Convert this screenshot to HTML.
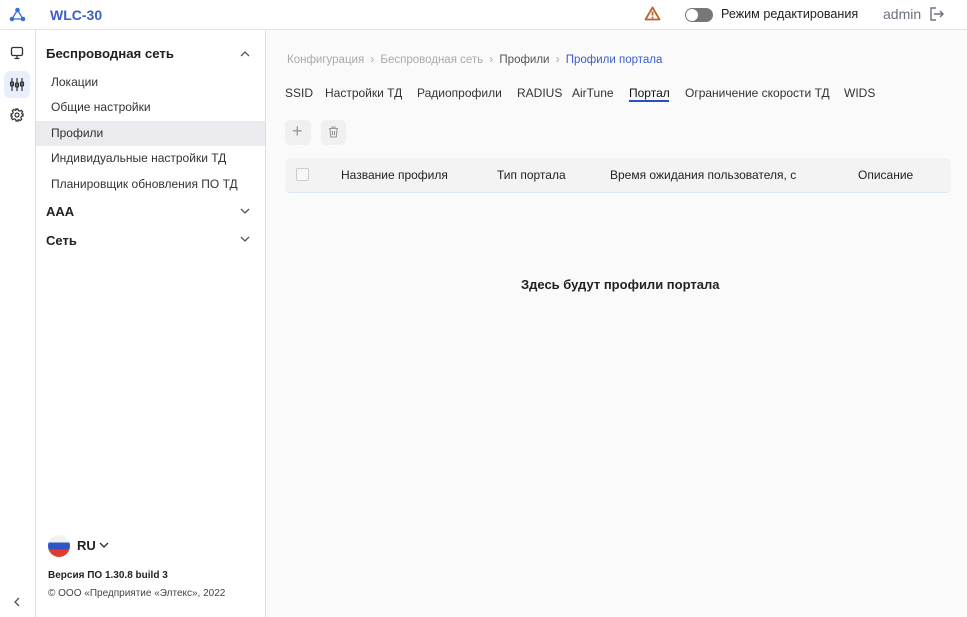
<!DOCTYPE html>
<html><head><meta charset="utf-8"><style>
*{box-sizing:border-box;margin:0;padding:0}
body{width:967px;height:617px;overflow:hidden;font-family:"Liberation Sans","Noto Sans CJK SC",sans-serif;background:#fafafa;color:#222;position:relative;font-size:12px}
.hdr{position:absolute;left:0;top:0;width:967px;height:30px;background:#fff;border-bottom:1px solid #e4e4ea}
.rail{position:absolute;left:0;top:30px;width:36px;height:587px;background:#fff;border-right:1px solid #dedee4}
.side{position:absolute;left:36px;top:30px;width:230px;height:587px;background:#fff;border-right:1px solid #dedee4}
.a{position:absolute;white-space:nowrap}
.item{position:absolute;left:0;width:229px;height:25px;padding-left:15px;line-height:25px;font-size:12px;color:#333}
.tab{position:absolute;top:86px;font-size:12px;color:#333}
</style></head><body>
<div class="hdr">
<svg class="a" style="left:9px;top:7px" width="17" height="15" viewBox="0 0 17 15"><g stroke="#3a6fd8" stroke-width="1.3" fill="none"><line x1="8.5" y1="3" x2="3" y2="12"/><line x1="8.5" y1="3" x2="14" y2="12"/><line x1="3" y1="12" x2="14" y2="12"/></g><circle cx="8.5" cy="3" r="2.3" fill="#3a6fd8"/><circle cx="3" cy="12" r="2.3" fill="#3a6fd8"/><circle cx="14" cy="12" r="2.3" fill="#3a6fd8"/></svg>
<div class="a" style="left:50px;top:7px;font-size:14px;font-weight:bold;color:#3a5fc8">WLC-30</div>
<svg class="a" style="left:644px;top:6px" width="17" height="15" viewBox="0 0 17 15"><path d="M8.5 1.5L15.5 13.5H1.5Z" fill="none" stroke="#c0622a" stroke-width="1.8" stroke-linejoin="round"/><line x1="8.5" y1="5.5" x2="8.5" y2="9.5" stroke="#c0622a" stroke-width="1.8"/><circle cx="8.5" cy="11.5" r="1" fill="#c0622a"/></svg>
<div class="a" style="left:685px;top:8px;width:28px;height:14px;border-radius:7px;background:#777"></div>
<div class="a" style="left:686px;top:9px;width:12px;height:12px;border-radius:6px;background:#fff"></div>
<div class="a" style="left:721px;top:7px;font-size:12.6px;color:#222">Режим редактирования</div>
<div class="a" style="left:883px;top:6px;font-size:14px;color:#6b7280">admin</div>
<svg class="a" style="left:928px;top:6px" width="16" height="16" viewBox="0 0 16 16" fill="none" stroke="#6b7280" stroke-width="1.4"><path d="M8 2H3v12h5"/><path d="M6 8h9M12 5l3 3-3 3"/></svg>
</div>
<div class="rail">
<svg class="a" style="left:10px;top:16px" width="14" height="14" viewBox="0 0 14 14" fill="none" stroke="#333" stroke-width="1.3"><rect x="1.5" y="1.5" width="11" height="8" rx="1.5"/><path d="M7 10v2.5M4.5 12.5h5"/></svg>
<div class="a" style="left:4px;top:41px;width:26px;height:27px;border-radius:6px;background:#e8eefb"></div>
<svg class="a" style="left:9px;top:47px" width="16" height="15" viewBox="0 0 16 15" fill="none" stroke="#333" stroke-width="1.2"><path d="M3 1v13M8 1v13M13 1v13"/><rect x="1.5" y="5" width="3" height="4" rx="1"/><rect x="6.5" y="6" width="3" height="4" rx="1"/><rect x="11.5" y="5" width="3" height="4" rx="1"/></svg>
<svg class="a" style="left:10px;top:78px" width="14" height="14" viewBox="0 0 14 14" fill="none" stroke="#333" stroke-width="1.2"><circle cx="7" cy="7" r="2"/><path d="M6 1h2l.4 1.6 1.4.6 1.4-.9 1.4 1.4-.9 1.4.6 1.4L13 6v2l-1.6.4-.6 1.4.9 1.4-1.4 1.4-1.4-.9-1.4.6L8 13H6l-.4-1.6-1.4-.6-1.4.9-1.4-1.4.9-1.4-.6-1.4L1 8V6l1.6-.4.6-1.4-.9-1.4 1.4-1.4 1.4.9 1.4-.6z"/></svg>
<svg class="a" style="left:12px;top:566px" width="10" height="12" viewBox="0 0 10 12" fill="none" stroke="#555" stroke-width="1.3"><path d="M7 2L3 6l4 4"/></svg>
</div>
<div class="side">
<div class="a" style="left:10px;top:16px;font-size:13.2px;font-weight:bold;color:#222">Беспроводная сеть</div>
<svg class="a" style="left:204px;top:20px" width="10" height="7" viewBox="0 0 10 7" fill="none" stroke="#555" stroke-width="1.3"><path d="M1 6l4-4 4 4"/></svg>
<div class="item" style="top:40px">Локации</div>
<div class="item" style="top:65px">Общие настройки</div>
<div class="item" style="top:91px;background:#ebebef">Профили</div>
<div class="item" style="top:116px">Индивидуальные настройки ТД</div>
<div class="item" style="top:142px">Планировщик обновления ПО ТД</div>
<div class="a" style="left:10px;top:174px;font-size:13px;font-weight:bold">AAA</div>
<svg class="a" style="left:204px;top:178px" width="10" height="7" viewBox="0 0 10 7" fill="none" stroke="#555" stroke-width="1.3"><path d="M1 1l4 4 4-4"/></svg>
<div class="a" style="left:10px;top:203px;font-size:13px;font-weight:bold">Сеть</div>
<svg class="a" style="left:204px;top:206px" width="10" height="7" viewBox="0 0 10 7" fill="none" stroke="#555" stroke-width="1.3"><path d="M1 1l4 4 4-4"/></svg>
<div class="a" style="left:12px;top:505px;width:22px;height:22px;border-radius:11px;overflow:hidden;background:linear-gradient(#f2f2f2 0 33%,#2f55c8 33% 66%,#e33a2e 66%)"></div>
<div class="a" style="left:41px;top:508px;font-size:13px;font-weight:bold">RU</div>
<svg class="a" style="left:63px;top:512px" width="10" height="7" viewBox="0 0 10 7" fill="none" stroke="#333" stroke-width="1.4"><path d="M1 1l4 4 4-4"/></svg>
<div class="a" style="left:12px;top:540px;font-size:10px;font-weight:bold">Версия ПО 1.30.8 build 3</div>
<div class="a" style="left:12px;top:558px;font-size:10px;color:#444">© ООО «Предприятие «Элтекс», 2022</div>
</div>
<div class="a" style="left:287px;top:54px;font-size:11.5px;color:#aaa">Конфигурация <span style="margin:0 3px">›</span> Беспроводная сеть <span style="margin:0 3px">›</span> <span style="color:#555">Профили</span> <span style="margin:0 3px">›</span> <span style="color:#3a5fc8">Профили портала</span></div>
<div class="tab" style="left:285px">SSID</div>
<div class="tab" style="left:325px">Настройки ТД</div>
<div class="tab" style="left:417px">Радиопрофили</div>
<div class="tab" style="left:517px">RADIUS</div>
<div class="tab" style="left:572px">AirTune</div>
<div class="tab" style="left:629px;color:#111">Портал</div>
<div class="a" style="left:629px;top:100px;width:40px;height:2px;background:#2950c0"></div>
<div class="tab" style="left:685px">Ограничение скорости ТД</div>
<div class="tab" style="left:844px">WIDS</div>
<div class="a" style="left:285px;top:120px;width:26px;height:25px;border-radius:5px;background:#f0f0f0"></div>
<div class="a" style="left:292px;top:121px;font-size:18px;color:#999">+</div>
<div class="a" style="left:321px;top:120px;width:25px;height:25px;border-radius:5px;background:#f0f0f0"></div>
<svg class="a" style="left:328px;top:126px" width="11" height="12" viewBox="0 0 11 12" fill="none" stroke="#999" stroke-width="1.1"><path d="M1 2.5h9M4 2.5V1h3v1.5M2 2.5l.7 8.5h5.6L9 2.5M4.5 5v4M6.5 5v4"/></svg>
<div class="a" style="left:285px;top:158px;width:666px;height:35px;border-radius:5px;background:#f3f3f4;border-bottom:1px solid #dde6f5"></div>
<div class="a" style="left:296px;top:168px;width:13px;height:13px;border:1px solid #ccc;border-radius:2px;background:#f7f7f7"></div>
<div class="a" style="left:341px;top:168px;font-size:12px">Название профиля</div>
<div class="a" style="left:497px;top:168px;font-size:12px">Тип портала</div>
<div class="a" style="left:610px;top:168px;font-size:12px">Время ожидания пользователя, с</div>
<div class="a" style="left:858px;top:168px;font-size:12px">Описание</div>
<div class="a" style="left:521px;top:277px;font-size:13px;font-weight:bold;color:#222">Здесь будут профили портала</div>
</body></html>
